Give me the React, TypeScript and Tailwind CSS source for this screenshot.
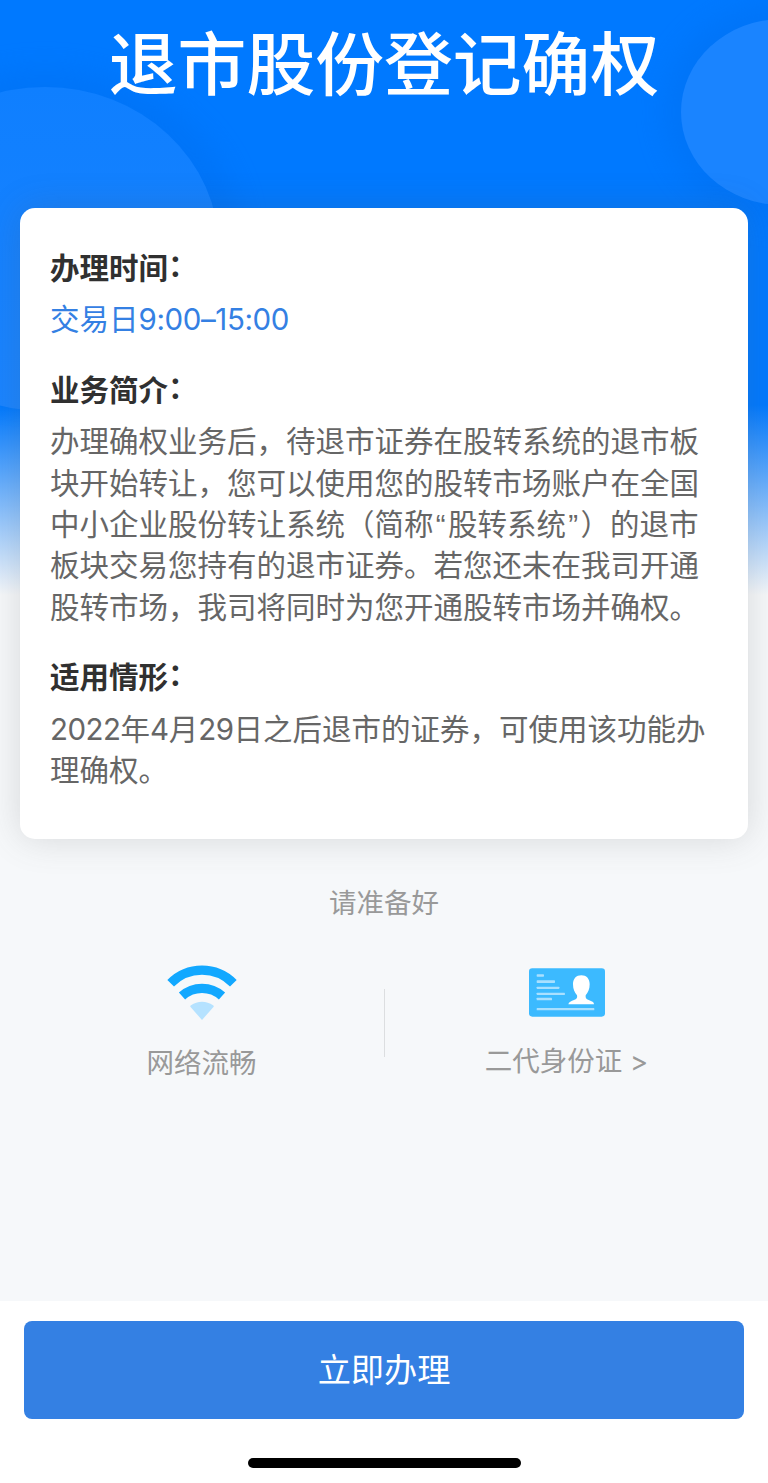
import type { ReactNode } from "react";

function WifiIcon() {
    return (
        <svg width="72" height="56" viewBox="-108 -165 216 168" fill="none">
            <path
                d="M-94 -110.5A132 132 0 0 1 94 -110.5"
                stroke="#12a8ff"
                strokeWidth="28"
            />
            <path
                d="M-60 -72A90 90 0 0 1 60 -72"
                stroke="#12a8ff"
                strokeWidth="28"
            />
            <path
                d="M0 0L-35 -40Q-36 -42 -33 -44A55 55 0 0 1 33 -44Q36 -42 35 -40Z"
                fill="#b5e2ff"
            />
        </svg>
    );
}

function IdCardIcon() {
    return (
        <svg width="76" height="49" viewBox="0 0 228 147">
            <rect y="1" width="228" height="145" rx="10" fill="#3cbaff" />
            <g fill="#a9e0ff">
                <rect x="23" y="19" width="22" height="7" rx="2" />
                <rect x="23" y="37" width="55" height="8" rx="2" />
                <rect x="23" y="56" width="68" height="7" rx="2" />
                <rect x="23" y="74" width="85" height="7" rx="2" />
                <rect x="23" y="89" width="46" height="8" rx="2" />
                <rect x="23" y="120" width="173" height="7" rx="2" />
            </g>
            <path
                d="M157 22C172 22 182 32 182 49C182 64 177 73 170 82C169 90 171 93 179 96C189 100 195 102 195 109H118C119 102 127 99 135 96C143 93 146 90 144 82C137 73 132 64 132 49C132 32 142 22 157 22Z"
                fill="#fff"
            />
        </svg>
    );
}

function Backdrop() {
    return (
        <svg
            className="absolute inset-x-0 top-0"
            width="768"
            height="595"
            viewBox="0 0 768 595"
        >
            <defs>
                <linearGradient id="sky" x1="0" y1="0" x2="0" y2="1">
                    <stop offset="0" stopColor="#0079ff" />
                    <stop offset="0.68" stopColor="#0079ff" />
                    <stop offset="1" stopColor="#f6f8fa" />
                </linearGradient>
                <linearGradient id="bubble" x1="0" y1="0" x2="0" y2="1">
                    <stop offset="0" stopColor="#0f7fff" />
                    <stop offset="1" stopColor="#1a84ff" />
                </linearGradient>
                <filter id="soft" x="-30%" y="-30%" width="160%" height="160%">
                    <feGaussianBlur stdDeviation="14" />
                </filter>
            </defs>
            <rect width="768" height="595" fill="url(#sky)" />
            <g fill="#006cea" opacity="0.35" filter="url(#soft)">
                <ellipse cx="45" cy="235" rx="195" ry="165" />
                <ellipse cx="782" cy="112" rx="118" ry="108" />
            </g>
            <ellipse cx="45" cy="249" rx="174" ry="162" fill="url(#bubble)" />
            <ellipse cx="782" cy="112" rx="101" ry="93" fill="#1a84ff" />
        </svg>
    );
}

function Section({ title, children }: { title: string; children: ReactNode }) {
    return (
        <section>
            <h2 className="mb-[10px] flex font-bold text-[#303030]">
                <span>{title}</span>
                <span className="-mt-[3px] h-[41px] w-[29px]">：</span>
            </h2>
            {children}
        </section>
    );
}

function Line({ children }: { children: ReactNode }) {
    return <span className="flex whitespace-nowrap">{children}</span>;
}

function Num({ children }: { children: ReactNode }) {
    return <span className="tracking-[-0.5px]">{children}</span>;
}

function Quote({ children }: { children: ReactNode }) {
    return (
        <span className="w-[14.5px] text-center font-['Liberation_Sans']">
            {children}
        </span>
    );
}

export default function App() {
    return (
        <div className="relative flex h-[1483px] w-[768px] flex-col overflow-hidden bg-[#f6f8fa] font-['Inter','Noto_Sans_CJK_SC',sans-serif] [text-spacing-trim:space-all]">
            <Backdrop />
            <header className="relative flex h-[208px] justify-center pt-[15px]">
                <h1 className="text-[68.8px] leading-[100px] font-medium whitespace-nowrap text-white">
                    退市股份登记确权
                </h1>
            </header>
            <main className="relative mx-5 flex h-[631px] flex-col gap-[29px] rounded-[15px] bg-white px-[30px] pt-[40px] text-[29.5px] leading-[41.4px] text-[#666] shadow-[0_0_36px_rgba(90,90,90,0.2)]">
                <Section title="办理时间">
                    <p className="flex text-[#3480e3]">
                        <span>交易日</span>
                        <span className="tracking-[-0.4px]">9:00–15:00</span>
                    </p>
                </Section>
                <Section title="业务简介">
                    <p>
                        <Line>办理确权业务后，待退市证券在股转系统的退市板</Line>
                        <Line>块开始转让，您可以使用您的股转市场账户在全国</Line>
                        <Line>
                            <span>中小企业股份转让系统（简称</span>
                            <Quote>“</Quote>
                            <span>股转系统</span>
                            <Quote>”</Quote>
                            <span>）的退市</span>
                        </Line>
                        <Line>板块交易您持有的退市证券。若您还未在我司开通</Line>
                        <Line>股转市场，我司将同时为您开通股转市场并确权。</Line>
                    </p>
                </Section>
                <Section title="适用情形">
                    <p>
                        <Line>
                            <Num>2022</Num>
                            <span>年</span>
                            <Num>4</Num>
                            <span>月</span>
                            <Num>29</Num>
                            <span>日之后退市的证券，可使用该功能办</span>
                        </Line>
                        <Line>理确权。</Line>
                    </p>
                </Section>
            </main>
            <div className="relative flex-grow pt-[44px] text-[27.5px] leading-10 text-[#999]">
                <p className="text-center">请准备好</p>
                <div className="mt-[41px] flex">
                    <div className="flex w-[384px] flex-col items-center pt-px pl-[19px]">
                        <WifiIcon />
                        <span className="mt-[22px]">网络流畅</span>
                    </div>
                    <div className="mt-[25px] h-[68px] w-px bg-[#dcdee0]" />
                    <div className="flex w-[363px] flex-col items-center pt-[4px]">
                        <IdCardIcon />
                        <span className="mt-[24px]">二代身份证 &gt;</span>
                    </div>
                </div>
            </div>
            <footer className="relative flex h-[182px] flex-col items-center bg-white pt-[20px]">
                <button className="h-[98px] w-[720px] rounded-lg bg-[#3480e3] pt-[2px] text-[33.2px] text-white">
                    立即办理
                </button>
                <div className="mt-[39px] h-[10px] w-[273px] rounded-full bg-black" />
            </footer>
        </div>
    );
}
